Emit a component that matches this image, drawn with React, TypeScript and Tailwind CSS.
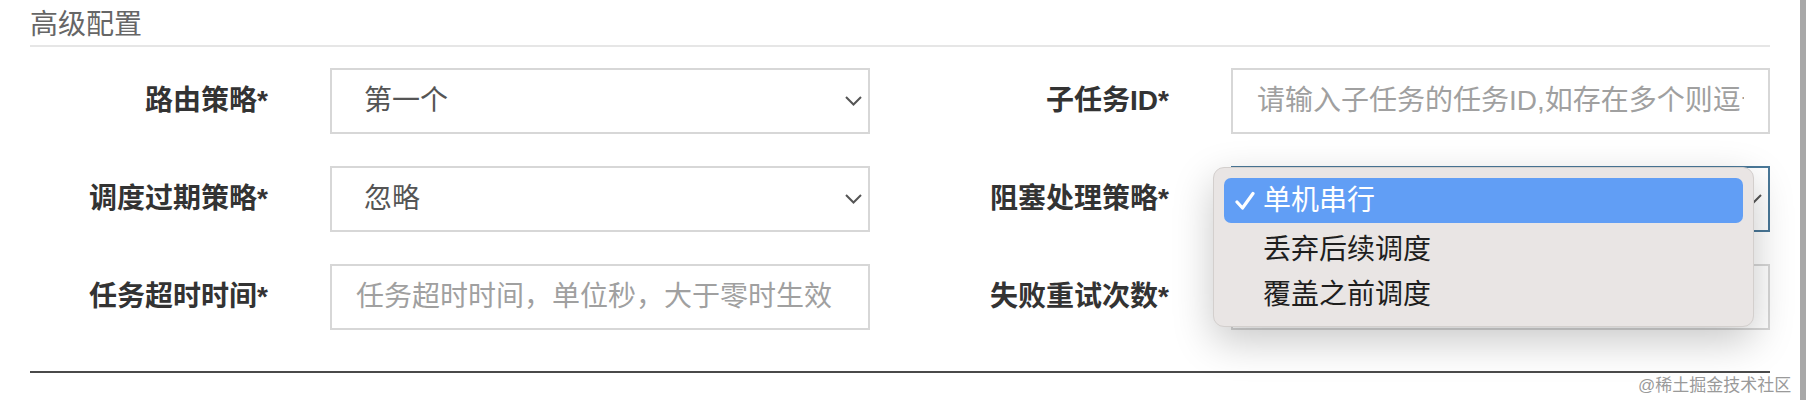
import type { ReactNode } from "react";

const FONT = { fontFamily: '"Liberation Sans", "Noto Sans CJK SC", sans-serif' };

function Chevron() {
  return (
    <svg width="17" height="10" viewBox="0 0 17 10" className="shrink-0">
      <polyline points="1,1 8.5,8.5 16,1" fill="none" stroke="#555" strokeWidth="2" />
    </svg>
  );
}

function Label({ text, w }: { text: string; w: string }) {
  return (
    <div className={`${w} shrink-0 text-right text-[28px] leading-[28px] font-bold text-[#333]`}>
      {text}
    </div>
  );
}

function Select({ value, w, focus, children }: { value: string; w: string; focus?: boolean; children?: ReactNode }) {
  return (
    <div
      className={`${w} relative ml-[62px] h-[66px] shrink-0 border-2 ${focus ? "border-[#4a7898]" : "border-[#d7d7d7]"} bg-white flex items-center pl-[32px] pr-[6px]`}
    >
      <span className="flex-1 text-[28px] leading-[28px] text-[#555]">{value}</span>
      <Chevron />
      {children}
    </div>
  );
}

// text field shown with its placeholder; the text is cut at the inner edge
function Input({ placeholder, w }: { placeholder: string; w: string }) {
  return (
    <div className={`${w} ml-[62px] h-[66px] shrink-0 border-2 border-[#d7d7d7] bg-white flex items-center pl-[24px] pr-[24px]`}>
      <div className="flex-1 overflow-hidden whitespace-nowrap text-[28px] leading-[32px] text-[#a0a0a0]">
        {placeholder}
      </div>
    </div>
  );
}

function Menu() {
  const items = ["单机串行", "丢弃后续调度", "覆盖之前调度"];
  return (
    <div className="absolute left-[-20px] top-[-1px] z-10 w-[541px] h-[160px] rounded-[11px] border border-[#d3cfcd] bg-[#e9e5e4] p-[10px] shadow-[0_14px_40px_rgba(0,0,0,0.22)]">
      {items.map((it, i) => (
        <div
          key={it}
          className={`h-[45px] flex items-center rounded-[7px] text-[28px] leading-[28px] ${
            i === 0 ? "bg-[#619ef5] text-white mb-[4px]" : "text-[#1e1e1e]"
          }`}
        >
          <span className="w-[39px] shrink-0 flex justify-center pl-[2px]">
            {i === 0 && (
              <svg width="20" height="20" viewBox="0 0 20 20">
                <path d="M2 11 L7.5 17 L18 2.5" fill="none" stroke="#fff" strokeWidth="3.2" strokeLinecap="round" strokeLinejoin="round" />
              </svg>
            )}
          </span>
          <span>{it}</span>
        </div>
      ))}
    </div>
  );
}

export default function App() {
  return (
    <div className="flex w-[1806px] h-[400px] bg-white overflow-hidden" style={FONT}>
      <div className="relative w-[1800px] h-[400px]">
        <div className="ml-[30px] w-[1740px] h-[45px] pt-[11px] text-[28px] leading-[28px] text-[#666]">高级配置</div>
        <div className="ml-[30px] w-[1740px] h-[2px] bg-[#e6e6e6]" />

        <div className="mt-[21px] flex flex-col gap-[32px]">
          <div className="flex items-center">
            <Label text="路由策略*" w="w-[268px]" />
            <Select value="第一个" w="w-[540px]" />
            <Label text="子任务ID*" w="w-[299px]" />
            <Input placeholder="请输入子任务的任务ID,如存在多个则逗号分隔" w="w-[539px]" />
          </div>
          <div className="flex items-center">
            <Label text="调度过期策略*" w="w-[268px]" />
            <Select value="忽略" w="w-[540px]" />
            <Label text="阻塞处理策略*" w="w-[299px]" />
            <Select value="单机串行" w="w-[539px]" focus>
              <Menu />
            </Select>
          </div>
          <div className="flex items-center">
            <Label text="任务超时时间*" w="w-[268px]" />
            <Input placeholder="任务超时时间，单位秒，大于零时生效" w="w-[540px]" />
            <Label text="失败重试次数*" w="w-[299px]" />
            <Input placeholder="" w="w-[539px]" />
          </div>
        </div>

        <div className="ml-[30px] mt-[41px] w-[1740px] h-[2px] bg-[#4a4a4a]" />

        <div className="absolute left-[1638px] top-[375px] whitespace-nowrap text-[17px] leading-[22px] text-[#9a9a9a]">@稀土掘金技术社区</div>
      </div>
      <div className="w-[6px] h-[400px] bg-[#a8a8a8]" />
    </div>
  );
}
